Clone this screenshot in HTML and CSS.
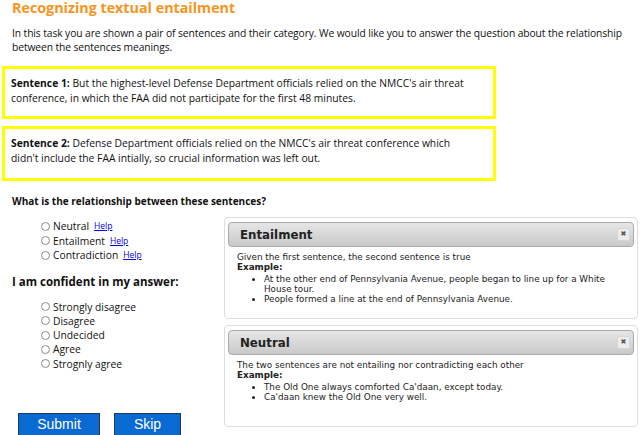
FILE: index.html
```html
<!DOCTYPE html>
<html>
<head>
<meta charset="utf-8">
<link rel="stylesheet" href="styles.css">
</head>
<body>
<div class="page">
  <h1 class="title">Recognizing textual entailment</h1>
  <p class="intro">In this task you are shown a pair of sentences and their category. We would like you to answer the question about the relationship between the sentences meanings.</p>
  <div class="sentence"><b>Sentence 1:</b> But the highest-level Defense Department officials relied on the NMCC's air threat conference, in which the FAA did not participate for the first 48 minutes.</div>
  <div class="sentence"><b>Sentence 2:</b> Defense Department officials relied on the NMCC's air threat conference which didn't include the FAA intially, so crucial information was left out.</div>
  <div class="question">What is the relationship between these sentences?</div>
  <div class="lower">
    <div class="left">
      <ul class="options">
        <li><span class="radio"></span>Neutral <a class="help" href="#">Help</a></li>
        <li><span class="radio"></span>Entailment <a class="help" href="#">Help</a></li>
        <li><span class="radio"></span>Contradiction <a class="help" href="#">Help</a></li>
      </ul>
      <h2 class="confident">I am confident in my answer:</h2>
      <ul class="options options-conf">
        <li><span class="radio"></span>Strongly disagree</li>
        <li><span class="radio"></span>Disagree</li>
        <li><span class="radio"></span>Undecided</li>
        <li><span class="radio"></span>Agree</li>
        <li><span class="radio"></span>Strognly agree</li>
      </ul>
      <div class="buttons">
        <button class="btn btn-submit">Submit</button>
        <button class="btn btn-skip">Skip</button>
      </div>
    </div>
    <div class="right">
      <div class="dialog">
        <div class="dialog-title"><span>Entailment</span><span class="close">&#10006;</span></div>
        <div class="dialog-body">
          <div>Given the first sentence, the second sentence is true</div>
          <div class="ex">Example:</div>
          <ul class="bullets">
            <li>At the other end of Pennsylvania Avenue, people began to line up for a White House tour.</li>
            <li>People formed a line at the end of Pennsylvania Avenue.</li>
          </ul>
        </div>
      </div>
      <div class="dialog">
        <div class="dialog-title"><span>Neutral</span><span class="close">&#10006;</span></div>
        <div class="dialog-body">
          <div>The two sentences are not entailing nor contradicting each other</div>
          <div class="ex">Example:</div>
          <ul class="bullets">
            <li>The Old One always comforted Ca'daan, except today.</li>
            <li>Ca'daan knew the Old One very well.</li>
          </ul>
        </div>
      </div>
    </div>
  </div>
</div>
</body>
</html>
```

FILE: styles.css
```css
html, body {
  margin: 0;
  padding: 0;
  background: #fff;
}
.page {
  font-family: "Open Sans", "Noto Sans", sans-serif;
  color: #111;
  font-size: 10.3px;
}
.title {
  margin: 0;
  padding: 0 12px;
  font-size: 14.3px;
  line-height: 16px;
  font-weight: 700;
  color: #f7941d;
}
.intro {
  margin: 11px 0 0;
  padding: 0 12px;
  line-height: 13.5px;
  letter-spacing: -0.1px;
}
.sentence {
  margin: 12px 144px 0 2px;
  border: 3px solid #ffff00;
  padding: 7px 14px 10px 6px;
  line-height: 15px;
}
.sentence + .sentence {
  margin-top: 7px;
  padding-bottom: 12px;
}
.question {
  margin: 13px 0 0;
  padding: 0 12px;
  font-weight: 700;
  font-size: 10px;
  line-height: 14px;
}
.lower {
  display: flex;
  margin-top: 9px;
}
.left {
  width: 224px;
  flex: none;
}
.options {
  list-style: none;
  margin: 2px 0 0;
  padding: 0 0 0 41px;
  line-height: 14.5px;
}
.options-conf {
  margin-top: 11px;
  line-height: 14.25px;
}
.options li {
  display: flex;
  align-items: center;
}
.radio {
  width: 7px;
  height: 7px;
  border: 1px solid #8a8a8a;
  border-radius: 50%;
  margin-right: 3px;
  flex: none;
}
.help {
  font-size: 8.5px;
  color: #0000ee;
  margin-left: 5px;
}
.confident {
  margin: 11px 0 0;
  padding: 0 12px;
  font-size: 11.5px;
  line-height: 15px;
  font-weight: 700;
}
.buttons {
  display: flex;
  gap: 14px;
  margin: 42px 0 0 18px;
}
.btn {
  background: #0a6ad4;
  color: #fff;
  border: 1px solid #1c3a5e;
  border-bottom-color: #222;
  border-right-color: #333;
  font-family: "Liberation Sans", Arial, sans-serif;
  font-size: 14px;
  height: 23px;
  padding: 0;
  margin: 0;
}
.btn-submit { width: 82px; }
.btn-skip { width: 67px; }
.right {
  width: 414px;
  flex: none;
  display: flex;
  flex-direction: column;
  gap: 6px;
}
.dialog {
  border: 1px solid #dddddd;
  border-radius: 4px;
  padding: 4px 3px;
  height: 92px;
  font-family: "DejaVu Sans", Verdana, sans-serif;
}
.dialog-title {
  display: flex;
  align-items: center;
  justify-content: space-between;
  height: 23px;
  border: 1px solid #aaaaaa;
  border-radius: 4px;
  background: linear-gradient(#e6e6e6, #c9c9c9);
  padding: 0 3px 0 11px;
  font-weight: 700;
  font-size: 11.8px;
  color: #222;
}
.close {
  width: 11px;
  height: 11px;
  background: #ececec;
  border: 1px solid #d6d6d6;
  border-radius: 2px;
  font-size: 7px;
  line-height: 11px;
  text-align: center;
  color: #555;
}
.dialog-body {
  padding: 5px 6px 0 9px;
  font-size: 8.8px;
  line-height: 10px;
  color: #222;
}
.ex {
  font-weight: 700;
}
.bullets {
  margin: 2px 0 0;
  padding: 0 0 0 27px;
}
```
